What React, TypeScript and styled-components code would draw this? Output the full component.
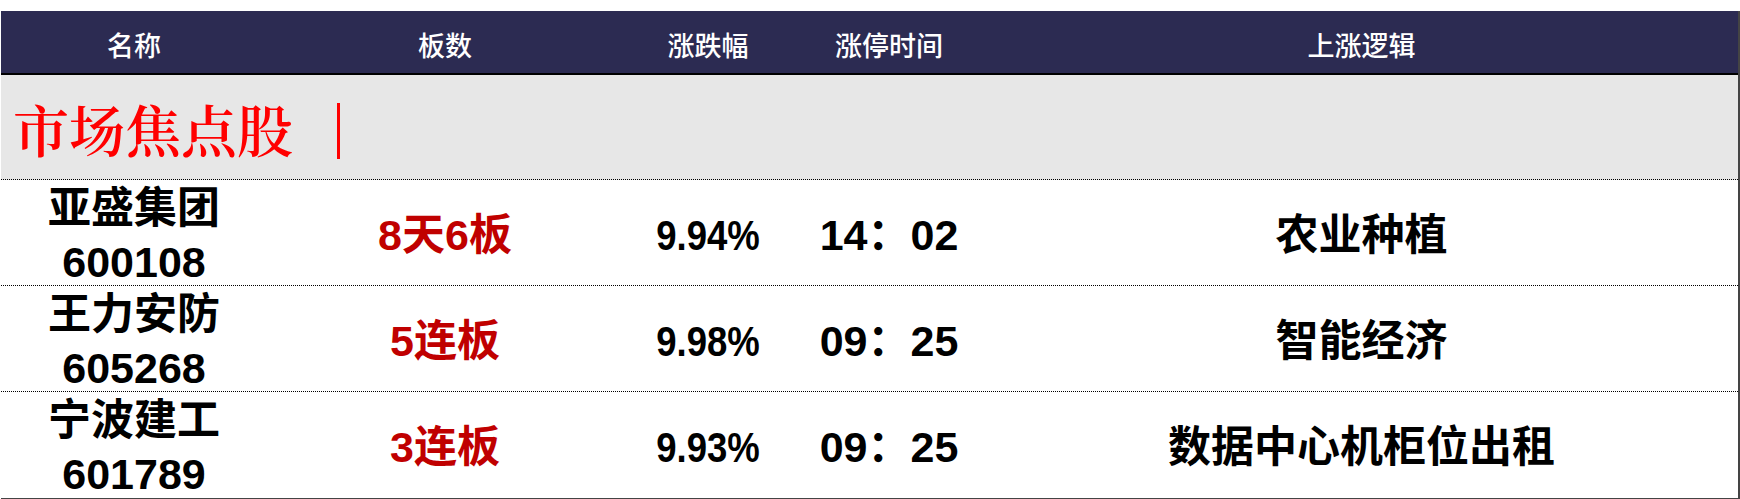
import styled, { createGlobalStyle } from "styled-components";

const GlobalStyle = createGlobalStyle`
  html, body {
    margin: 0;
    padding: 0;
    background: #fff;
  }
`;

const cols = "266px 356px 170px 192px 1fr";

const Page = styled.div`
  width: 1740px;
  padding-top: 11px;
  padding-left: 1px;
  box-sizing: border-box;
`;

const Table = styled.div`
  width: 1739px;
  box-sizing: border-box;
  border-right: 2px solid #444;
  border-bottom: 2px solid #444;
`;

const HeadRow = styled.div`
  display: grid;
  grid-template-columns: ${cols};
  height: 62px;
  background-color: #2c2b52;
  border-bottom: 2px solid #000;
`;

const HeadCell = styled.div`
  display: flex;
  align-items: center;
  justify-content: center;
  padding-top: 5px;
  color: #fff;
  font-family: "Noto Sans CJK SC", sans-serif;
  font-size: 27px;
  font-weight: 500;
`;

const TitleRow = styled.div`
  display: flex;
  align-items: center;
  height: 105px;
  padding-left: 12px;
  padding-top: 2px;
  box-sizing: border-box;
  background-color: #e7e7e7;
  border-bottom: 1px dotted #000;
`;

const Title = styled.span`
  color: #ff0000;
  font-family: "Noto Serif CJK SC", "Noto Sans CJK SC", serif;
  font-size: 56px;
  font-weight: 600;
  line-height: 1;
`;

const TitleBar = styled.span`
  display: inline-block;
  width: 3px;
  height: 56px;
  margin-left: 44px;
  margin-top: 6px;
  background-color: #ff0000;
`;

const Row = styled.div<{ $last?: boolean }>`
  display: grid;
  grid-template-columns: ${cols};
  height: ${(p) => (p.$last ? "106px" : "105px")};
  border-bottom: ${(p) => (p.$last ? "none" : "1px dotted #000")};
`;

const Cell = styled.div<{ $red?: boolean }>`
  display: flex;
  flex-direction: column;
  align-items: center;
  justify-content: center;
  padding-top: 1px;
  box-sizing: border-box;
  color: ${(p) => (p.$red ? "#c00000" : "#000")};
  font-family: "Liberation Sans", "Noto Sans CJK SC", sans-serif;
  font-size: 43px;
  font-weight: 700;
  line-height: 54px;
  white-space: nowrap;
`;

const Narrow = styled.span`
  display: inline-block;
  transform: scaleX(0.85);
`;

const rows = [
  { name: "亚盛集团", code: "600108", boards: "8天6板", pct: "9.94%", time: "14：02", logic: "农业种植" },
  { name: "王力安防", code: "605268", boards: "5连板", pct: "9.98%", time: "09：25", logic: "智能经济" },
  { name: "宁波建工", code: "601789", boards: "3连板", pct: "9.93%", time: "09：25", logic: "数据中心机柜位出租" },
];

export default function App() {
  return (
    <>
      <GlobalStyle />
      <Page>
        <Table>
          <HeadRow>
            <HeadCell>名称</HeadCell>
            <HeadCell>板数</HeadCell>
            <HeadCell>涨跌幅</HeadCell>
            <HeadCell>涨停时间</HeadCell>
            <HeadCell>上涨逻辑</HeadCell>
          </HeadRow>
          <TitleRow>
            <Title>市场焦点股</Title>
            <TitleBar />
          </TitleRow>
          {rows.map((r, i) => (
            <Row key={r.code} $last={i === rows.length - 1}>
              <Cell>
                <span>{r.name}</span>
                <span>{r.code}</span>
              </Cell>
              <Cell $red>{r.boards}</Cell>
              <Cell>
                <Narrow>{r.pct}</Narrow>
              </Cell>
              <Cell>{r.time}</Cell>
              <Cell>{r.logic}</Cell>
            </Row>
          ))}
        </Table>
      </Page>
    </>
  );
}
